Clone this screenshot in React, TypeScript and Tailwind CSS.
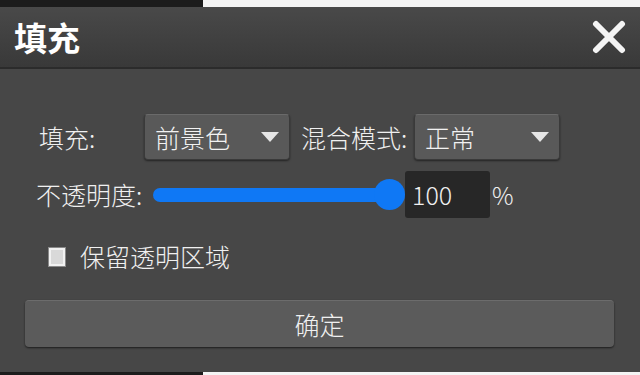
import React from "react";

const font = { fontFamily: '"Noto Sans CJK SC", "Noto Sans", sans-serif' };

function Caret() {
  return (
    <svg width="20" height="12" viewBox="0 0 20 12">
      <polygon points="1,1 19,1 10,11" fill="#e6e6e6" />
    </svg>
  );
}

function Select({ text, className }: { text: string; className?: string }) {
  return (
    <div
      className={
        "flex h-[46px] w-[146px] items-center justify-between rounded-[4px] border border-[#3a3a3a] border-t-[#6a6a6a] bg-[#595959] pl-[10px] pr-[9px] shadow-[0_1px_2px_rgba(0,0,0,0.5)] " +
        (className ?? "")
      }
    >
      <span className="text-[25px] font-light leading-none text-[#f2f2f2]">{text}</span>
      <Caret />
    </div>
  );
}

export default function App() {
  return (
    <div className="flex h-[375px] w-[640px] flex-col overflow-hidden bg-[#474747] text-[#f0f0f0]" style={font}>
      <div className="flex h-[7px] shrink-0">
        <div className="w-[203px] bg-[#1c1c1c]" />
        <div className="flex-1 bg-[#f4f4f4]" />
      </div>
      <div className="flex h-[62px] shrink-0 items-center justify-between border-b-2 border-[#2b2b2b] bg-gradient-to-b from-[#494949] to-[#393939] pl-[14px] pr-[14px]">
        <span className="text-[33px] font-bold leading-none text-white">填充</span>
        <svg width="34" height="34" viewBox="0 0 34 34">
          <path d="M4 4 L30 30 M30 4 L4 30" stroke="#f4f4f4" strokeWidth="6" strokeLinecap="round" />
        </svg>
      </div>
      <div className="flex flex-1 flex-col pt-[45px]">
        <div className="flex items-center">
          <span className="ml-[39px] w-[105px] text-[25px] font-light leading-none">填充:</span>
          <Select text="前景色" />
          <span className="ml-[11px] w-[113px] text-[25px] font-light leading-none">混合模式:</span>
          <Select text="正常" />
        </div>
        <div className="mt-[11px] flex items-center">
          <span className="ml-[36px] w-[117px] text-[25px] font-light leading-none">不透明度:</span>
          <div className="relative h-[32px] w-[252px]">
            <div className="absolute left-0 right-[8px] top-[9px] h-[14px] rounded-full bg-[#0f78f5]" />
            <div className="absolute right-0 top-0 h-[31px] w-[31px] rounded-full bg-[#0f78f5]" />
          </div>
          <div className="flex h-[47px] w-[85px] items-center rounded-[3px] bg-[#272727] pl-[7px] text-[25px] font-light leading-none">100</div>
          <span className="ml-[2px] text-[24px] font-light leading-none">%</span>
        </div>
        <div className="mt-[26px] flex items-center">
          <div className="ml-[48px] h-[20px] w-[18px] border border-[#8a8a8a] bg-[#d9d9d9] shadow-[inset_0_0_0_2px_#f2f2f2]" />
          <span className="ml-[14px] text-[25px] font-light leading-none">保留透明区域</span>
        </div>
        <div className="ml-[25px] mt-[31px] flex h-[47px] w-[589px] items-center justify-center rounded-[4px] border-t border-[#6c6c6c] bg-[#5b5b5b] shadow-[0_1px_2px_rgba(0,0,0,0.6)]">
          <span className="text-[25px] font-light leading-none">确定</span>
        </div>
      </div>
      <div className="flex h-[3px] shrink-0">
        <div className="w-[203px] bg-[#1c1c1c]" />
        <div className="flex-1 bg-[#f4f4f4]" />
      </div>
    </div>
  );
}
